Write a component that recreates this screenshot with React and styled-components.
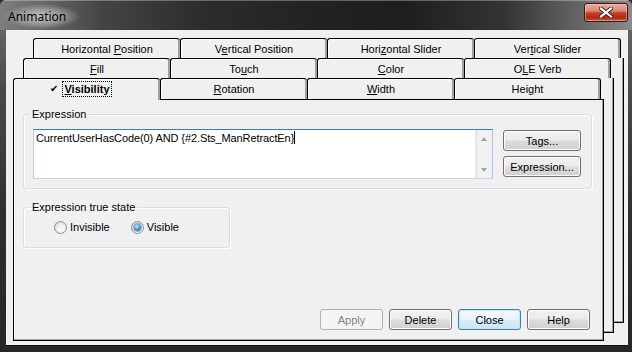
import React from 'react';
import styled, { createGlobalStyle } from 'styled-components';

const GlobalStyle = createGlobalStyle`
  html, body {
    margin: 0;
    padding: 0;
    background: #2a2a2a;
  }
  body {
    font-family: "Liberation Sans", Arial, sans-serif;
    font-size: 11px;
    color: #000;
  }
`;

const Window = styled.div`
  width: 632px;
  height: 352px;
  display: flex;
  flex-direction: column;
  overflow: hidden;
  border-radius: 6px 6px 0 0;
  background: linear-gradient(180deg, #727272 0%, #4a4a4a 25%, #303030 60%, #262626 100%);
`;

const TitleBar = styled.div`
  height: 30px;
  flex: none;
  display: flex;
  align-items: flex-start;
  justify-content: space-between;
  padding: 0 4px 0 0;
  background: linear-gradient(90deg, #7e7e7e 0%, #676767 7%, #454545 16%, #2c2c2c 32%, #222 50%, #1e1e1e 64%, #343434 80%, #5e5e5e 90%, #8a8a8a 100%);
  box-shadow: inset 0 1px 0 rgba(255, 255, 255, 0.3);
`;

const Title = styled.div`
  margin-top: 4px;
  padding: 5px 14px 5px 8px;
  font-family: "Noto Sans", "Open Sans", sans-serif;
  font-size: 12px;
  line-height: 15px;
  color: #000;
  background: radial-gradient(ellipse closest-side at 52% 50%, rgba(215, 215, 215, 0.85) 0%, rgba(185, 185, 185, 0.6) 55%, rgba(140, 140, 140, 0) 100%);
`;

const CloseButton = styled.div`
  width: 44px;
  height: 19px;
  margin-top: 3px;
  box-sizing: border-box;
  border: 1px solid #3b1510;
  border-radius: 3px;
  background: linear-gradient(180deg, #e9ad9f 0%, #d98a78 40%, #c4442b 52%, #b3290f 80%, #d4563a 100%);
  box-shadow: inset 0 0 0 1px rgba(255, 220, 210, 0.45);
  display: flex;
  align-items: center;
  justify-content: center;
`;

const Client = styled.div`
  flex: 1;
  margin: 0 4px 6px 6px;
  background: #f0f0f0;
  border-bottom: 1px solid #111;
`;

const Stack = styled.div`
  display: grid;
  padding: 8px 0 0 7px;
`;

const Layer = styled.div`
  grid-area: 1 / 1;
  align-self: start;
  justify-self: start;
  margin-left: ${p => p.$x}px;
  margin-top: ${p => p.$y}px;
  width: 591px;
  height: ${p => p.$h}px;
  display: flex;
  flex-direction: column;
`;

const TabRow = styled.div`
  display: flex;
  flex: none;
  height: ${p => p.$h}px;
`;

const Tab = styled.div`
  position: relative;
  width: 147px;
  height: ${p => (p.$active ? 22 : p.$h)}px;
  box-sizing: border-box;
  border-top: 1px solid #000;
  border-left: 1px solid #000;
  border-right: ${p => (p.$last ? '1px solid #000' : 'none')};
  border-radius: 3px 3px 0 0;
  background: #f0f0f0;
  box-shadow: inset -2px 0 0 #a0a0a0, inset 1px 1px 0 #fff;
  display: flex;
  align-items: center;
  justify-content: center;
  font-weight: ${p => (p.$active ? 'bold' : 'normal')};
  z-index: ${p => (p.$active ? 2 : 1)};
  padding-bottom: ${p => (p.$active ? 2 : 0)}px;
  white-space: pre;
`;

const TabLabel = styled.span`
  u {
    text-decoration: underline;
  }
`;

const ActiveLabel = styled.span`
  position: relative;
  outline: 1px dotted #000;
  outline-offset: 1px;
  &::before {
    content: '✔';
    position: absolute;
    right: 100%;
    margin-right: 6px;
    font-size: 10px;
    font-weight: normal;
  }
`;

const Page = styled.div`
  flex: 1;
  box-sizing: border-box;
  background: #f0f0f0;
  border-left: 1px solid #000;
  border-right: 1px solid #000;
  border-bottom: 1px solid #000;
  border-top: ${p => (p.$front ? '1px solid #000' : 'none')};
  box-shadow: inset -1px -1px 0 #a0a0a0, inset 1px 0 0 #fff;
  display: flex;
  flex-direction: column;
  padding: ${p => (p.$front ? '7px 9px 10px 9px' : '0')};
`;

const Group = styled.fieldset`
  margin: ${p => p.$top}px 0 0 0;
  width: ${p => p.$w}px;
  box-sizing: border-box;
  border: 1px solid #d5dfe5;
  border-radius: 3px;
  box-shadow: inset 1px 1px 0 #fff, 1px 1px 0 #fff;
  padding: 0;
  min-width: 0;
`;

const Legend = styled.legend`
  margin-left: 7px;
  padding: 0 2px 0 1px;
  font-size: 11px;
  line-height: 14px;
`;

const GroupBody = styled.div`
  padding: ${p => p.$pad};
`;

const ExprRow = styled.div`
  display: flex;
  gap: 10px;
`;

const TextBox = styled.div`
  width: 460px;
  height: 50px;
  box-sizing: border-box;
  background: #fff;
  border: 1px solid;
  border-color: #3d7bad #a4c9e3 #b7d9ed #b5cfe7;
  display: flex;
`;

const TextContent = styled.div`
  flex: 1;
  padding: 1px 2px;
  line-height: 14px;
  white-space: nowrap;
  letter-spacing: -0.1px;
`;

const Caret = styled.span`
  display: inline-block;
  width: 1px;
  height: 13px;
  background: #000;
  vertical-align: -2px;
`;

const ScrollBar = styled.div`
  width: 17px;
  background: linear-gradient(90deg, #e6e6e6 0%, #f3f3f3 30%, #f0f0f0 100%);
  display: flex;
  flex-direction: column;
  justify-content: space-between;
`;

const ScrollArrow = styled.div`
  height: 17px;
  display: flex;
  align-items: center;
  justify-content: center;
  &::after {
    content: '';
    width: 0;
    height: 0;
    border-left: 3.5px solid transparent;
    border-right: 3.5px solid transparent;
    ${p => (p.$down ? 'border-top: 4px solid #a3a3a3;' : 'border-bottom: 4px solid #a3a3a3;')}
  }
`;

const SideButtons = styled.div`
  display: flex;
  flex-direction: column;
  gap: 5px;
  padding-top: 1px;
`;

const Button = styled.button`
  width: ${p => p.$w}px;
  height: 21px;
  box-sizing: border-box;
  padding: 0;
  font-family: "Liberation Sans", Arial, sans-serif;
  font-size: 11px;
  color: ${p => (p.$disabled ? '#838383' : '#000')};
  border: 1px solid ${p => (p.$disabled ? '#adb2b5' : p.$default ? '#3c7fb1' : '#707070')};
  border-radius: 3px;
  background: ${p =>
    p.$disabled
      ? '#f4f4f4'
      : p.$default
      ? 'linear-gradient(180deg, #f5fafd 0%, #e9f4fb 48%, #d9ebf7 52%, #cfe5f4 100%)'
      : 'linear-gradient(180deg, #f2f2f2 0%, #ebebeb 48%, #dddddd 52%, #cfcfcf 100%)'};
  box-shadow: inset 0 0 0 1px ${p => (p.$disabled ? '#f4f4f4' : p.$default ? '#c4e5f6' : '#fcfcfc')};
`;

const RadioRow = styled.div`
  display: flex;
  align-items: center;
  gap: 21px;
`;

const RadioItem = styled.label`
  display: flex;
  align-items: center;
  gap: 3px;
  line-height: 13px;
`;

const RadioDot = styled.span`
  width: 13px;
  height: 13px;
  box-sizing: border-box;
  border-radius: 50%;
  border: 1px solid #8e8f8f;
  background: radial-gradient(circle at 60% 65%, #ffffff 0%, #f0f0f0 40%, #d2d2d2 100%);
  display: flex;
  align-items: center;
  justify-content: center;
  &::after {
    content: '';
    display: ${p => (p.$checked ? 'block' : 'none')};
    width: 7px;
    height: 7px;
    border-radius: 50%;
    background: radial-gradient(circle at 40% 35%, #c2ecfd 0%, #4aa3dd 45%, #1a4f8a 100%);
    box-shadow: 0 0 0 1px rgba(40, 80, 130, 0.45);
  }
`;

const Footer = styled.div`
  margin-top: auto;
  margin-right: 4px;
  display: flex;
  justify-content: flex-end;
  gap: 6px;
`;

const rows = [
  { x: 20, y: 0, h: 285, tabs: [
    <>Horizontal <u>P</u>osition</>,
    <>V<u>e</u>rtical Position</>,
    <>Hori<u>z</u>ontal Slider</>,
    <>Ver<u>t</u>ical Slider</>,
  ] },
  { x: 10, y: 20, h: 275, tabs: [
    <><u>F</u>ill</>,
    <>To<u>u</u>ch</>,
    <><u>C</u>olor</>,
    <>O<u>L</u>E Verb</>,
  ] },
];

const frontTabs = [
  <><u>R</u>otation</>,
  <><u>W</u>idth</>,
  <>Hei<u>g</u>ht</>,
];

export default function App() {
  return (
    <>
      <GlobalStyle />
      <Window>
        <TitleBar>
          <Title>Animation</Title>
          <CloseButton>
            <svg width="14" height="11" viewBox="0 0 14 11">
              <path d="M2 1.5 L12 9.5 M12 1.5 L2 9.5" stroke="#3a2320" strokeWidth="4" strokeLinecap="square" />
              <path d="M2 1.5 L12 9.5 M12 1.5 L2 9.5" stroke="#fff" strokeWidth="2.2" strokeLinecap="square" />
            </svg>
          </CloseButton>
        </TitleBar>
        <Client>
          <Stack>
            {rows.map((r, i) => (
              <Layer key={i} $x={r.x} $y={r.y} $h={r.h}>
                <TabRow $h={20}>
                  {r.tabs.map((t, j) => (
                    <Tab key={j} $h={20} $last={j === 3}>
                      <TabLabel>{t}</TabLabel>
                    </Tab>
                  ))}
                </TabRow>
                <Page />
              </Layer>
            ))}
            <Layer $x={0} $y={40} $h={263}>
              <TabRow $h={21}>
                <Tab $h={21} $active>
                  <ActiveLabel>
                    <u>V</u>isibility
                  </ActiveLabel>
                </Tab>
                {frontTabs.map((t, j) => (
                  <Tab key={j} $h={21} $last={j === 2}>
                    <TabLabel>{t}</TabLabel>
                  </Tab>
                ))}
              </TabRow>
              <Page $front>
                <Group $top={0} $w={569}>
                  <Legend>Expression</Legend>
                  <GroupBody $pad="8px 10px 9px 9px">
                    <ExprRow>
                      <TextBox>
                        <TextContent>
                          CurrentUserHasCode(0) AND {'{#2.Sts_ManRetractEn}'}
                          <Caret />
                        </TextContent>
                        <ScrollBar>
                          <ScrollArrow />
                          <ScrollArrow $down />
                        </ScrollBar>
                      </TextBox>
                      <SideButtons>
                        <Button $w={78}>Tags...</Button>
                        <Button $w={78}>Expression...</Button>
                      </SideButtons>
                    </ExprRow>
                  </GroupBody>
                </Group>
                <Group $top={11} $w={207}>
                  <Legend>Expression true state</Legend>
                  <GroupBody $pad="7px 8px 13px 30px">
                    <RadioRow>
                      <RadioItem>
                        <RadioDot />
                        Invisible
                      </RadioItem>
                      <RadioItem>
                        <RadioDot $checked />
                        Visible
                      </RadioItem>
                    </RadioRow>
                  </GroupBody>
                </Group>
                <Footer>
                  <Button $w={63} $disabled>Apply</Button>
                  <Button $w={63}>Delete</Button>
                  <Button $w={63} $default>Close</Button>
                  <Button $w={63}>Help</Button>
                </Footer>
              </Page>
            </Layer>
          </Stack>
        </Client>
      </Window>
    </>
  );
}
